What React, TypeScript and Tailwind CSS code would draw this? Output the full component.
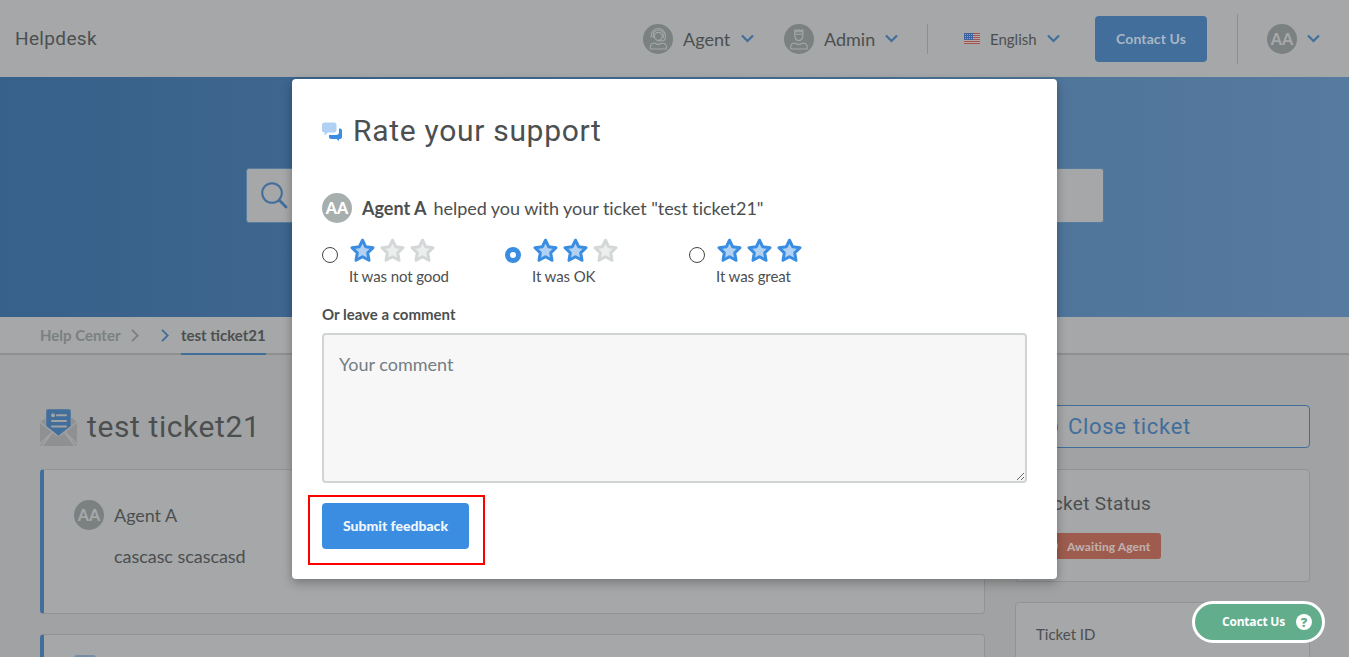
import type { ReactNode } from 'react';

const lato = "font-['Lato','Liberation_Sans',sans-serif]";
const heading = "font-['Roboto','Liberation_Sans',sans-serif]";

function Chevron({ className }: { className: string }) {
  return (
    <svg viewBox="0 0 13 9" className={`h-[9px] w-[13px] shrink-0 ${className}`} fill="none" stroke="#426e9b" strokeWidth="2.2">
      <path d="M1 1.5 6.5 7 12 1.5" />
    </svg>
  );
}

function Crumb({ color, className }: { color: string; className: string }) {
  return (
    <svg viewBox="0 0 8 13" className={`h-[13px] w-[8px] shrink-0 ${className}`} fill="none" stroke={color} strokeWidth="1.8">
      <path d="M1 .8 6.8 6.5 1 12.2" />
    </svg>
  );
}

function Avatar({ className }: { className: string }) {
  return (
    <div className={`flex size-[30px] shrink-0 items-center justify-center rounded-full text-[16px] font-black ${className}`}>
      AA
    </div>
  );
}

function AgentIcon() {
  return (
    <svg viewBox="0 0 30 30" className="size-[30px] shrink-0" fill="none" stroke="#a5a7a8" strokeWidth="1.1" strokeLinecap="round" strokeLinejoin="round">
      <circle cx="15" cy="15" r="15" fill="#7b8080" stroke="none" />
      <path d="M8.3 13v-1.5a7 7 0 0 1 14 0V14q0 2.7-3 2.7h-3" />
      <path d="M10.3 13.5V11a5 5 0 0 1 10 0v2.5" />
      <circle cx="15.3" cy="12.3" r="3.9" />
      <path d="M14 16.7h3M7.4 25v-2q0-3.7 4-3.7h.8q3 2.2 6.2 0h1q4 0 4 3.7v2Z" />
    </svg>
  );
}

function AdminIcon() {
  return (
    <svg viewBox="0 0 30 30" className="size-[30px] shrink-0" fill="none" stroke="#a5a7a8" strokeWidth="1.1" strokeLinecap="round" strokeLinejoin="round">
      <circle cx="15" cy="15" r="15" fill="#7b8080" stroke="none" />
      <path d="M10.8 10.2V5.7l2.3 1 1.7-1.2 1.7 1.2 2.3-1v4.5Z" />
      <path d="M10.8 7.8h8M10.8 10.2v2.3q1 4 4 4t4-4v-2.3" />
      <path d="M6.7 25v-2.2q0-3.5 3.8-3.5h1q3.4 2.2 6.8 0h1q3.8 0 3.8 3.5V25Z" />
    </svg>
  );
}

function Flag() {
  return (
    <svg viewBox="0 0 16 11" className="h-[11px] w-[16px] shrink-0" shapeRendering="crispEdges">
      <rect width="16" height="11" fill="#b4aaa9" />
      {[0, 2, 4, 6, 8, 10].map((y) => (
        <rect key={y} y={y} width="16" height="1" fill="#a4544f" />
      ))}
      <rect width="9" height="7" fill="#3f62a0" />
      {[1, 3, 5].map((y) =>
        [1, 3, 5, 7].map((x) => <rect key={`${x}-${y}`} x={x} y={y} width="1" height="1" fill="#8b9cb9" />),
      )}
    </svg>
  );
}

function Star({ on }: { on: boolean }) {
  return (
    <svg
      viewBox="0 0 25 25"
      className="size-[25px] shrink-0"
      fill={on ? '#b0d1f3' : '#edefee'}
      stroke={on ? '#3a8de0' : '#d3d7d7'}
      strokeWidth="3"
      strokeLinejoin="round"
    >
      <path d="M12.5 2.2 15.6 8.7 23 9.7 17.7 14.8 19 22.3 12.5 18.8 6 22.3 7.3 14.8 2 9.7 9.4 8.7Z" />
    </svg>
  );
}

function Option({ stars, label, checked }: { stars: number; label: string; checked?: boolean }) {
  return (
    <label className={`flex items-start ${checked ? 'w-[184px]' : 'w-[183px]'}`}>
      <span
        className={`mt-[9px] size-[16px] shrink-0 rounded-full bg-white ${
          checked ? 'border-[5px] border-[#3a8de0]' : 'border border-[#444]'
        }`}
      />
      <span className="ml-[11px] flex flex-col">
        <span className="ml-px flex gap-[5px]">
          {[1, 2, 3].map((n) => (
            <Star key={n} on={n <= stars} />
          ))}
        </span>
        <span className="mt-[3px] text-[15px] leading-[20px] tracking-[-0.1px] whitespace-nowrap">{label}</span>
      </span>
    </label>
  );
}

function Card({ className, children }: { className: string; children?: ReactNode }) {
  return <div className={`rounded-[4px] border border-[#919394] bg-[#a5a7a8] ${className}`}>{children}</div>;
}

function Header() {
  return (
    <header className="flex h-[77px] items-center bg-[#a5a7a8]">
      <div className={`${heading} w-[643px] shrink-0 pt-[2px] pl-[15px] text-[19px] tracking-[0.35px]`}>Helpdesk</div>
      <AgentIcon />
      <span className="ml-[10px] w-[58px] shrink-0 pt-[2px] text-[18px]">Agent</span>
      <Chevron className="" />
      <span className="w-[30px] shrink-0" />
      <AdminIcon />
      <span className="ml-[10px] w-[61px] shrink-0 pt-[2px] text-[18px]">Admin</span>
      <Chevron className="" />
      <span className="ml-[29px] h-[30px] w-px shrink-0 bg-[#8b8d8e]" />
      <span className="w-[36px] shrink-0" />
      <Flag />
      <span className="ml-[10px] w-[57px] shrink-0 pt-[2px] text-[15px]">English</span>
      <Chevron className="" />
      <button className="ml-[35px] h-[46px] w-[112px] shrink-0 rounded-[4px] bg-[#426e9b] text-[14px] font-bold tracking-[0.1px] text-[#a9b7c4]">Contact Us</button>
      <span className="ml-[30px] h-[50px] w-px shrink-0 bg-[#8b8d8e]" />
      <Avatar className="mr-[10px] ml-[29px] bg-[#7b8080] text-[#a5a7a8]" />
      <Chevron className="" />
    </header>
  );
}

function Conversation() {
  return (
    <main className="w-[945px] shrink-0">
      <div className="flex h-[44px] items-center">
        <svg viewBox="0 0 38 38" className="mt-px size-[38px] shrink-0">
          <path d="M0 13 6 9h26l5 4v22q0 2-2 2H2q-2 0-2-2Z" fill="#8e9091" />
          <path d="M0 13 12.5 23 0 35M37 13 24.5 23 37 35M2 37 13 22.5q5.500 8 11 0L35 37" fill="none" stroke="#a1a2a3" strokeWidth="1.4" />
          <path d="M6 2q0-2 2-2h21q2 0 2 2v15L18.500 27 6 17Z" fill="#426e9b" stroke="#a1a2a3" strokeWidth=".5" />
          <circle cx="13" cy="6.300" r="2" fill="#a1a2a3" />
          <path d="M17 6.300h9M12 12h14M12 17.500h14" stroke="#a1a2a3" strokeWidth="2" strokeLinecap="round" />
        </svg>
        <h1 className={`${heading} ml-[9px] pb-[2px] text-[30px] tracking-[0.6px]`}>test ticket21</h1>
      </div>
      <Card className="mt-[20px] flex h-[145px] border-l-4 border-l-[#426e9b] pt-[30px] pl-[30px] text-[18px]">
        <Avatar className="bg-[#7b8080] text-[#a5a7a8]" />
        <div className="ml-[10px] leading-[31px] tracking-[-0.05px]">
          <div>Agent A</div>
          <div className="mt-[10px]">cascasc scascasd</div>
        </div>
      </Card>
      <Card className="mt-[20px] h-[145px] border-l-4 border-l-[#426e9b] pt-[20px] pl-[30px]">
        <div className="h-[22px] w-[22px] rounded-[3px] bg-[#778da5]" />
      </Card>
    </main>
  );
}

function Sidebar() {
  return (
    <aside className="w-[295px] shrink-0">
      <button className={`${heading} flex h-[43px] w-full items-center rounded-[4px] border border-[#426e9b] bg-[#a5a7a8] pl-[22px] text-[22px] tracking-[0.7px] text-[#426e9b]`}>
        <svg viewBox="0 0 20 20" className="mr-[10px] size-[20px]" fill="none" stroke="#426e9b" strokeWidth="2">
          <circle cx="10" cy="10" r="9" />
          <path d="m6 10 3 3 5-6" />
        </svg>
        Close ticket
      </button>
      <Card className="mt-[21px] h-[113px] px-[20px] pt-[21px]">
        <h2 className={`${heading} text-[19px] leading-[26px] tracking-[0.35px]`}>Ticket Status</h2>
        <div className="mt-[16px] flex h-[26px] w-[125px] items-center rounded-[3px] bg-[#9d5c4e] pl-[10px] text-[12px] font-black tracking-[0.05px] text-[#bfadab]">
          <span className="mr-[9px] size-[12px] rounded-full border-2 border-[#bfadab]" />
          <span className="pt-px whitespace-nowrap">Awaiting Agent</span>
        </div>
      </Card>
      <Card className="mt-[20px] h-[145px] px-[20px] pt-[19px] text-[15px] leading-[24px]">Ticket ID</Card>
    </aside>
  );
}

function RatingDialog() {
  return (
    <section role="dialog" className="absolute top-[79px] left-[292px] flex h-[500px] w-[765px] flex-col rounded-[4px] bg-white px-[30px] text-[#4c4f50] shadow-[0_5px_11px_rgba(0,0,0,0.22),0_0_6px_rgba(0,0,0,0.1)]">
      <div className="mt-[30px] flex h-[44px] items-center">
        <svg viewBox="0 0 21 19" className="h-[19px] w-[21px] shrink-0">
          <path d="M9 17q-2 0-2-2v-2h7q3 0 3-3V6.500h1q2 0 2 2V15q0 2-2 2h-1v2l-2.500-2Z" fill="#3a8de0" />
          <path d="M2.500.500H12q2.500 0 2.500 2.500v5q0 2.500-2.500 2.500H6L2.500 13.500v-3Q0 10.500 0 8V3Q0 .500 2.500.500Z" fill="#b0d1f3" />
        </svg>
        <h2 className={`${heading} ml-[10px] pb-[2px] text-[30px] tracking-[0.7px] whitespace-nowrap`}>Rate your support</h2>
      </div>
      <div className="mt-[40px] flex h-[30px] items-center text-[18px] whitespace-nowrap">
        <Avatar className="bg-[#a7afae] text-white" />
        <b className="ml-[10px]">Agent A</b>
        <span className="ml-[7px] tracking-[-0.04px]">helped you with your ticket "test ticket21"</span>
      </div>
      <div className="mt-[15px] flex h-[50px]">
        <Option stars={1} label="It was not good" />
        <Option stars={2} label="It was OK" checked />
        <Option stars={3} label="It was great" />
      </div>
      <div className="mt-[16px] h-[20px] text-[15px] leading-[20px] font-bold">Or leave a comment</div>
      <textarea
        placeholder="Your comment"
        className="mt-[9px] block h-[150px] w-full shrink-0 resize rounded-[4px] border-2 border-[#d0d5d4] bg-[#f7f7f7] px-[15px] py-[16px] text-[18px] leading-[27px] outline-none placeholder:text-[#757d84]"
      />
      <button className="mt-[20px] h-[46px] w-[147px] shrink-0 rounded-[4px] bg-[#3a8de0] pb-[2px] text-[14px] font-black text-[#f0f6fd]">Submit feedback</button>
      <div className="pointer-events-none absolute top-[416px] left-[16px] h-[70px] w-[177px] border-2 border-[#ff0000]" />
    </section>
  );
}

export default function App() {
  return (
    <div className={`${lato} relative h-[657px] w-[1349px] overflow-hidden bg-[#a1a2a3] text-[#4c4f50]`}>
      <Header />
      <div className="flex h-[240px] items-center justify-center bg-linear-to-r from-[#37608a] to-[#577b9f]">
        <div className="mt-[-4px] flex h-[55px] w-[858px] items-center rounded-[3px] border border-[#557b9f] bg-[#a5a7a8] pl-[14px]">
          <svg viewBox="0 0 27 27" className="size-[27px]" fill="none" stroke="#426e9b" strokeLinecap="round">
            <circle cx="11" cy="11" r="9.800" strokeWidth="2" />
            <path d="m18.300 18.300 6.700 6.700" strokeWidth="2.800" />
          </svg>
        </div>
      </div>
      <nav className="flex h-[38px] border-b-2 border-[#8d8f90] bg-[#a5a7a8] pl-[40px] text-[15px] leading-[37px] font-bold">
        <span className="w-[91px] whitespace-nowrap text-[#7b8080]">Help Center</span>
        <Crumb color="#7b8080" className="mt-[12px]" />
        <Crumb color="#426e9b" className="mt-[12px] ml-[22px]" />
        <span className="ml-[12px] h-[38px] w-[85px] border-b-2 border-[#426e9b] whitespace-nowrap">test ticket21</span>
      </nav>
      <div className="flex gap-[30px] px-[40px] pt-[50px]">
        <Conversation />
        <Sidebar />
      </div>
      <RatingDialog />
      <button className="absolute top-[601px] left-[1192px] flex h-[42px] w-[133px] items-center rounded-full border-[3px] border-white bg-[#62ad8c] pl-[27px] font-['Open_Sans','Liberation_Sans',sans-serif] text-[12px] font-bold text-white">
        <span className="w-[74px] text-left tracking-[-0.2px] whitespace-nowrap">Contact Us</span>
        <span className="flex size-[16px] items-center justify-center rounded-full bg-white text-[13px] leading-none font-extrabold text-[#62ad8c]">?</span>
      </button>
    </div>
  );
}
